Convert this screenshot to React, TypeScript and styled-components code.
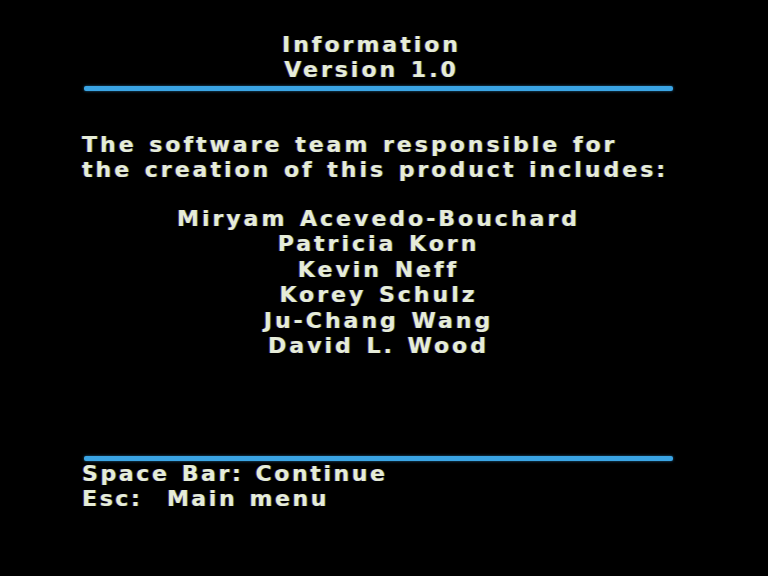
import React from "react";
import styled, { createGlobalStyle } from "styled-components";

const GlobalStyle = createGlobalStyle`
  html, body {
    margin: 0;
    padding: 0;
    background: #000;
  }
`;

const Screen = styled.div`
  width: 768px;
  height: 576px;
  box-sizing: border-box;
  padding: 32px 95px 0 84px;
  display: flex;
  flex-direction: column;
  background: #000;
  color: #e6ecd9;
  font-family: "DejaVu Sans", "Liberation Sans", sans-serif;
  font-weight: bold;
  font-size: 22px;
  line-height: 25px;
  letter-spacing: 3px;
  word-spacing: 2px;
  text-shadow: -1px 0 0 rgba(140, 60, 200, 0.55), 1px 0 0 rgba(90, 200, 90, 0.45);
`;

const Title = styled.div`
  text-align: center;
  white-space: pre;
  padding-right: 14px;
`;

const Rule = styled.div<{ $gap?: number }>`
  height: 5px;
  background: #3aa4e4;
  border-radius: 2px;
  box-shadow: 0 0 3px rgba(58, 164, 228, 0.6);
  margin-top: ${(p) => p.$gap ?? 0}px;
`;

const Paragraph = styled.p`
  margin: 41px 0 0 -2px;
  white-space: pre;
`;

const NameList = styled.ul`
  list-style: none;
  margin: 24px 0 0;
  padding: 0;
  text-align: center;
`;

const Name = styled.li`
  height: 25.4px;
`;

const Spacer = styled.div`
  flex: 1;
`;

const Footer = styled.div`
  white-space: pre;
  margin: 0 0 0 -2px;
  padding-bottom: 65px;
  letter-spacing: 2.6px;
`;

const names = [
  "Miryam Acevedo-Bouchard",
  "Patricia Korn",
  "Kevin Neff",
  "Korey Schulz",
  "Ju-Chang Wang",
  "David L. Wood",
];

export default function App() {
  return (
    <>
      <GlobalStyle />
      <Screen>
        <Title>
          Information
          <br />
          Version 1.0
        </Title>
        <Rule $gap={4} />
        <Paragraph>
          The software team responsible for
          <br />
          the creation of this product includes:
        </Paragraph>
        <NameList>
          {names.map((n) => (
            <Name key={n}>{n}</Name>
          ))}
        </NameList>
        <Spacer />
        <Rule />
        <Footer>
          Space Bar: Continue
          <br />
          {"Esc:  Main menu"}
        </Footer>
      </Screen>
    </>
  );
}
